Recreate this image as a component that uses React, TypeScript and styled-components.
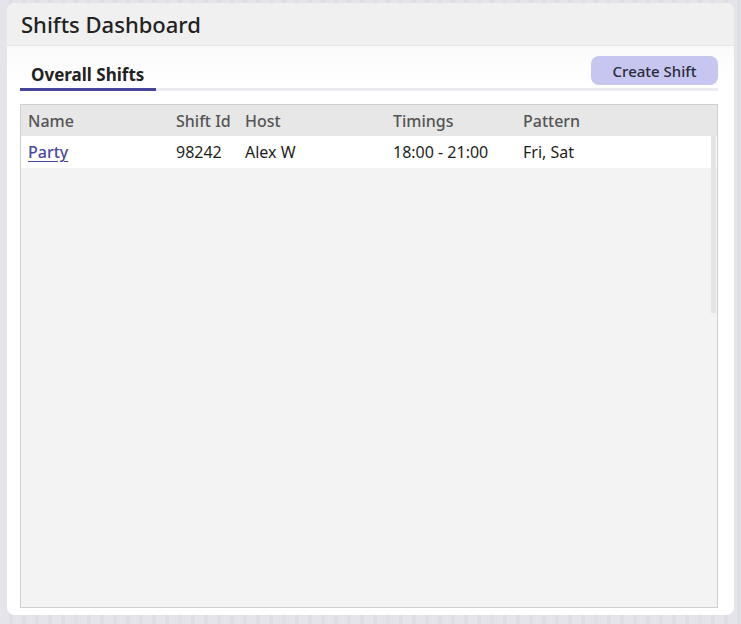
import React from 'react';
import styled, { createGlobalStyle } from 'styled-components';

const GlobalStyle = createGlobalStyle`
    html, body {
        margin: 0;
        padding: 0;
        background: #e3e3e9;
        font-family: 'Noto Sans', 'Open Sans', sans-serif;
    }
`;

const Page = styled.div`
    width: 741px;
    height: 624px;
    box-sizing: border-box;
    padding: 3px 7px 9px 7px;
    background: repeating-linear-gradient(90deg, #e4e4ea 0 9px, #dedee5 9px 13px);
`;

const Card = styled.div`
    height: 100%;
    display: flex;
    flex-direction: column;
    background: #ffffff;
    border-radius: 8px;
    overflow: hidden;
`;

const Header = styled.div`
    height: 43px;
    display: flex;
    align-items: center;
    padding-left: 14px;
    background: #f0f0f0;
    border-bottom: 1px solid #e6e6e6;
    box-sizing: border-box;
`;

const Title = styled.h1`
    margin: 0;
    font-size: 22px;
    font-weight: 500;
    color: #222;
`;

const Body = styled.div`
    flex: 1;
    display: flex;
    flex-direction: column;
    padding: 10px 16px 7px 13px;
    min-height: 0;
    background: linear-gradient(180deg, #fafafa 0, #ffffff 40px);
`;

const TabRow = styled.div`
    display: flex;
    justify-content: space-between;
    align-items: flex-end;
    border-bottom: 3px solid #ececf0;
    height: 35px;
    box-sizing: border-box;
`;

const Tab = styled.div<{ $active?: boolean }>`
    padding: 0 12px 2px 11px;
    margin-bottom: -3px;
    font-size: 17px;
    font-weight: 700;
    color: #222;
    border-bottom: 3px solid ${(p) => (p.$active ? '#45469a' : 'transparent')};
    line-height: 23px;
`;

const CreateButton = styled.button`
    align-self: flex-start;
    width: 127px;
    height: 29px;
    border: none;
    border-radius: 8px;
    background: #c6c6f0;
    color: #2a2a3a;
    font-family: inherit;
    font-size: 15px;
    font-weight: 500;
    cursor: pointer;
`;

const TableBox = styled.div`
    position: relative;
    flex: 1;
    margin-top: 13px;
    border: 1px solid #cfcfcf;
    background: #f3f3f3;
    overflow: hidden;
`;

const Table = styled.table`
    width: 100%;
    table-layout: fixed;
    border-collapse: collapse;
    font-size: 16px;
`;

const HeadRow = styled.tr`
    background: #e7e7e7;
    height: 31px;
`;

const Th = styled.th<{ $w?: number }>`
    box-sizing: border-box;
    text-align: left;
    font-weight: 500;
    color: #555;
    padding: 0 0 0 7px;
    width: ${(p) => (p.$w ? `${p.$w}px` : 'auto')};
`;

const Row = styled.tr`
    background: #ffffff;
    height: 32px;
`;

const Td = styled.td`
    padding: 0 0 0 7px;
    color: #1e1e1e;
    font-weight: 400;
    white-space: nowrap;
`;

const NameLink = styled.a`
    color: #4a4aa0;
    font-weight: 500;
    text-decoration: underline;
    text-underline-offset: 3px;
`;

const ScrollThumb = styled.div`
    position: absolute;
    right: 1px;
    top: 31px;
    width: 5px;
    height: 177px;
    background: #e4e4e4;
`;

const columns = [
    { label: 'Name', width: 148 },
    { label: 'Shift Id', width: 69 },
    { label: 'Host', width: 148 },
    { label: 'Timings', width: 130 },
    { label: 'Pattern' },
];

const shifts = [
    { name: 'Party', id: '98242', host: 'Alex W', timings: '18:00 - 21:00', pattern: 'Fri, Sat' },
];

export default function App() {
    return (
        <>
            <GlobalStyle />
            <Page>
                <Card>
                    <Header>
                        <Title>Shifts Dashboard</Title>
                    </Header>
                    <Body>
                        <TabRow>
                            <Tab $active>Overall Shifts</Tab>
                            <CreateButton>Create Shift</CreateButton>
                        </TabRow>
                        <TableBox>
                            <Table>
                                <thead>
                                    <HeadRow>
                                        {columns.map((c) => (
                                            <Th key={c.label} $w={c.width}>
                                                {c.label}
                                            </Th>
                                        ))}
                                    </HeadRow>
                                </thead>
                                <tbody>
                                    {shifts.map((s) => (
                                        <Row key={s.id}>
                                            <Td>
                                                <NameLink href="#">{s.name}</NameLink>
                                            </Td>
                                            <Td>{s.id}</Td>
                                            <Td>{s.host}</Td>
                                            <Td>{s.timings}</Td>
                                            <Td>{s.pattern}</Td>
                                        </Row>
                                    ))}
                                </tbody>
                            </Table>
                            <ScrollThumb />
                        </TableBox>
                    </Body>
                </Card>
            </Page>
        </>
    );
}
